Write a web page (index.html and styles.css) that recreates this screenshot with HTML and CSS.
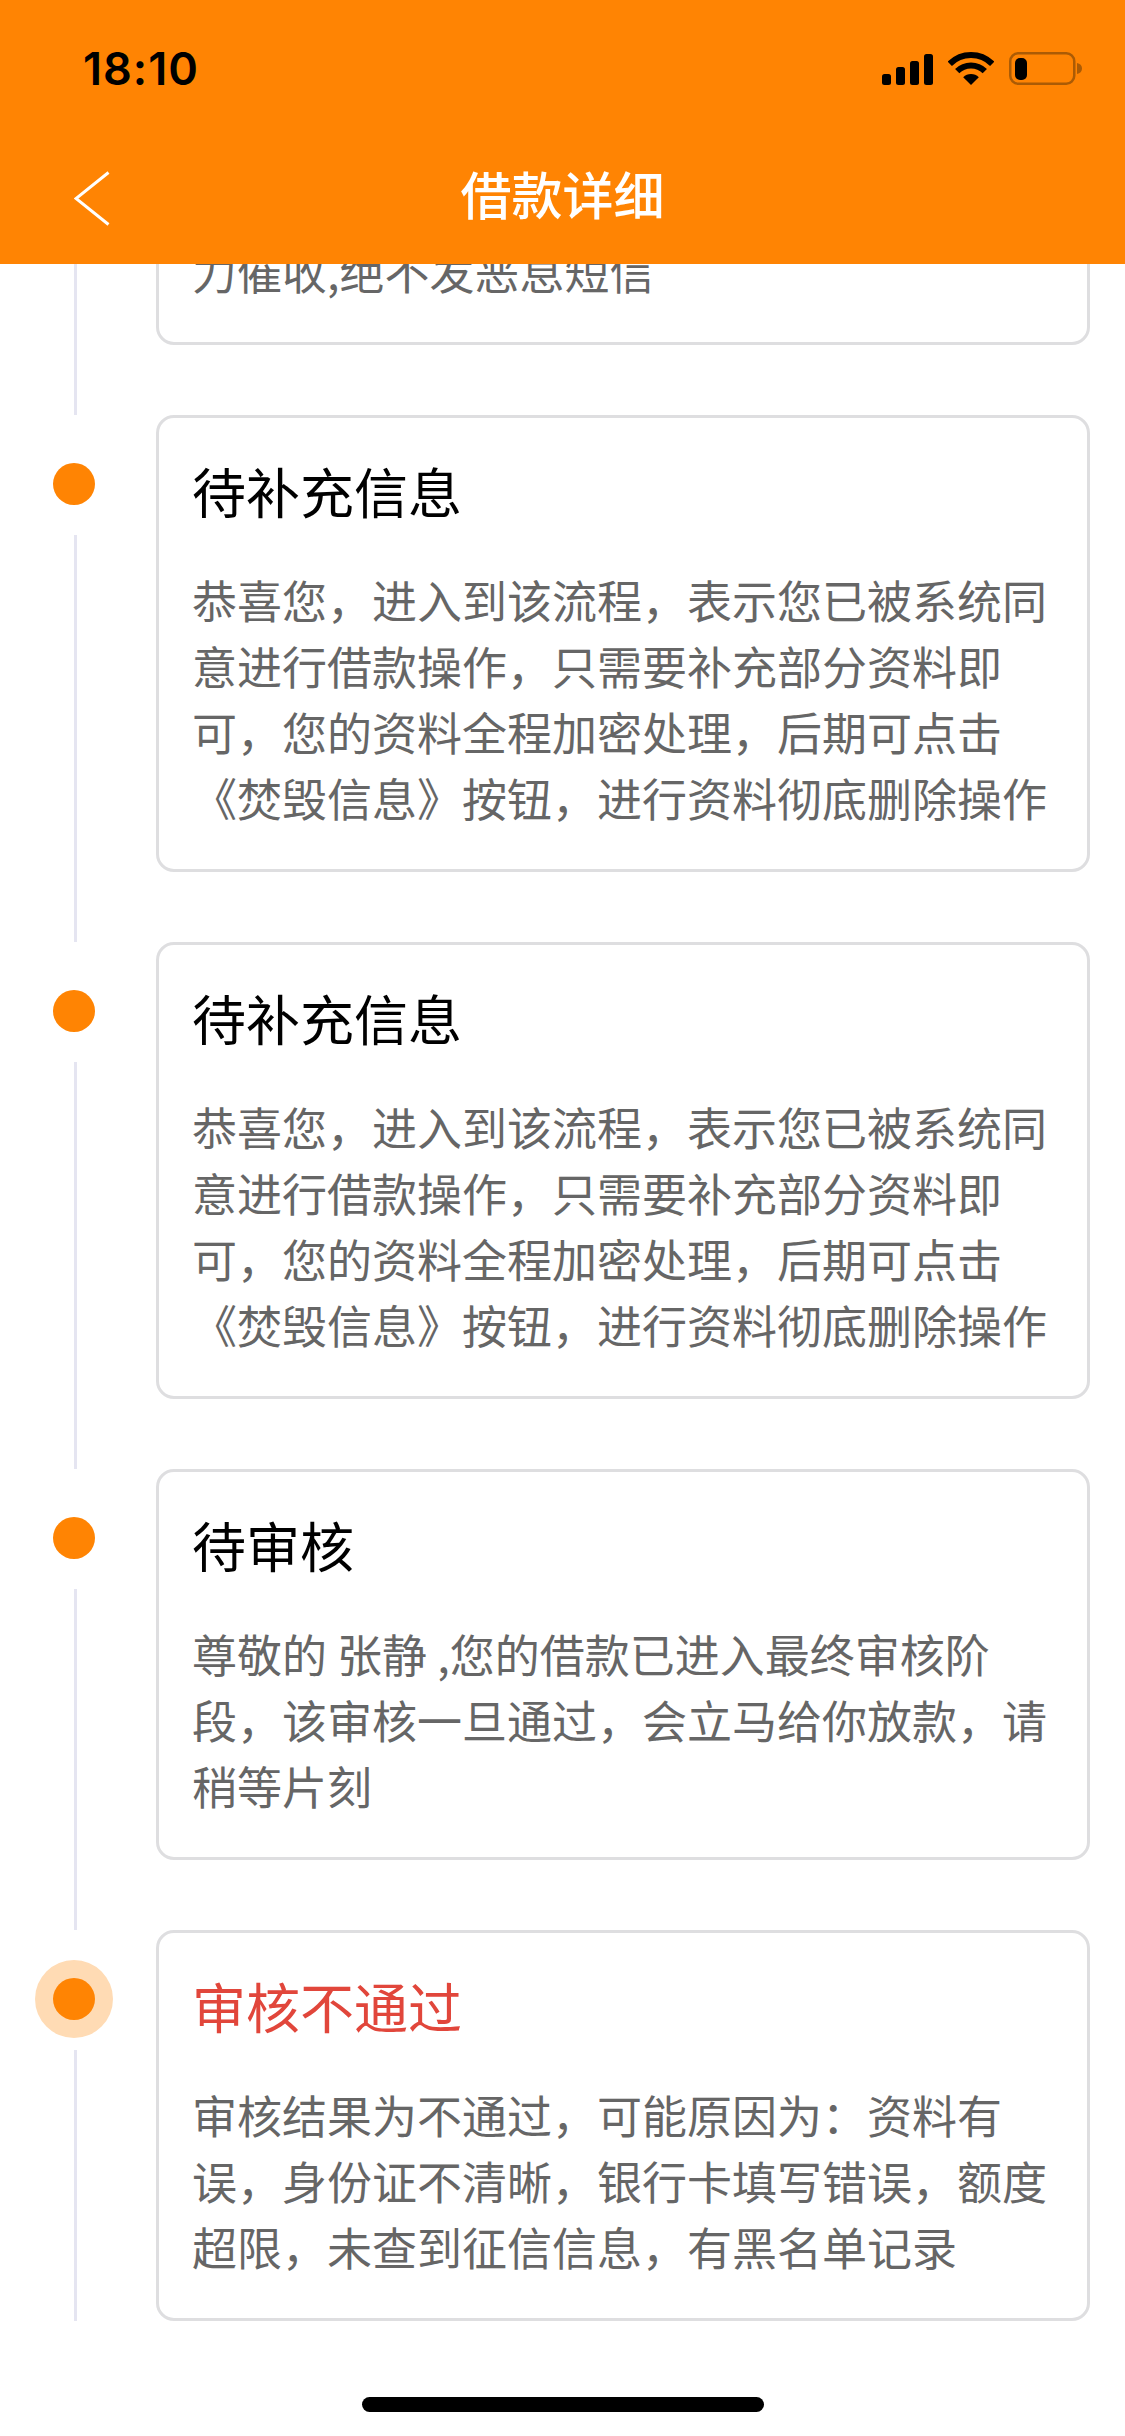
FILE: index.html
```html
<!DOCTYPE html>
<html lang="zh-CN">
<head>
<meta charset="utf-8">
<title>借款详细</title>
<link rel="stylesheet" href="styles.css">
</head>
<body>
<div class="app">
  <header class="top">
    <div class="status">
      <span class="time">18:10</span>
      <div class="status-icons">
        <svg class="signal" viewBox="0 0 51 31" width="51" height="31"><rect x="0" y="20" width="9" height="11" rx="2.5"/><rect x="14" y="13" width="9" height="18" rx="2.5"/><rect x="28" y="7" width="9" height="24" rx="2.5"/><rect x="42" y="0" width="9" height="31" rx="2.5"/></svg>
        <svg class="wifi" viewBox="0 0 46 33" width="46" height="33"><path d="M1.8 11.8A30 30 0 0 1 44.2 11.8" fill="none" stroke="#000" stroke-width="6"/><path d="M9.2 19.2A19.5 19.5 0 0 1 36.8 19.2" fill="none" stroke="#000" stroke-width="6"/><path d="M23 33L15.2 25.2A11 11 0 0 1 30.8 25.2Z"/></svg>
        <svg class="battery" viewBox="0 0 73 33" width="73" height="33"><rect x="1.25" y="1.25" width="64" height="30.5" rx="8" fill="none" stroke="#ab5b05" stroke-width="2.5"/><rect x="6" y="6" width="12" height="22" rx="5"/><path d="M68 11c3 .5 5 2.500 5 5.500s-2 5-5 5.500Z" fill="#ab5b05"/></svg>
      </div>
    </div>
    <div class="nav">
      <svg class="back" viewBox="0 0 36 55" width="36" height="55"><path d="M34.500 1.500L2 27.500L34.500 53.500" fill="none" stroke="#fff" stroke-width="3"/></svg>
      <h1 class="nav-title">借款详细</h1>
    </div>
  </header>

  <main class="list">
    <section class="item item-first">
      <div class="rail"><span class="line"></span></div>
      <div class="card card-clipped">
        <p class="card-body">力催收,绝不发恶息短信</p>
      </div>
    </section>

    <section class="item">
      <div class="rail"><span class="dot"></span><span class="line"></span></div>
      <div class="card">
        <h2 class="card-title">待补充信息</h2>
        <p class="card-body">恭喜您&#xFF0C;进入到该流程&#xFF0C;表示您已被系统同意进行借款操作&#xFF0C;只需要补充部分资料即可&#xFF0C;您的资料全程加密处理&#xFF0C;后期可点击《焚毁信息》按钮&#xFF0C;进行资料彻底删除操作</p>
      </div>
    </section>

    <section class="item">
      <div class="rail"><span class="dot"></span><span class="line"></span></div>
      <div class="card">
        <h2 class="card-title">待补充信息</h2>
        <p class="card-body">恭喜您&#xFF0C;进入到该流程&#xFF0C;表示您已被系统同意进行借款操作&#xFF0C;只需要补充部分资料即可&#xFF0C;您的资料全程加密处理&#xFF0C;后期可点击《焚毁信息》按钮&#xFF0C;进行资料彻底删除操作</p>
      </div>
    </section>

    <section class="item">
      <div class="rail"><span class="dot"></span><span class="line"></span></div>
      <div class="card">
        <h2 class="card-title">待审核</h2>
        <p class="card-body">尊敬的 张静 ,您的借款已进入最终审核阶段&#xFF0C;该审核一旦通过&#xFF0C;会立马给你放款&#xFF0C;请稍等片刻</p>
      </div>
    </section>

    <section class="item item-last">
      <div class="rail"><span class="dot dot-active"></span><span class="line"></span></div>
      <div class="card">
        <h2 class="card-title card-title-fail">审核不通过</h2>
        <p class="card-body">审核结果为不通过&#xFF0C;可能原因为&#xFF1A;资料有误&#xFF0C;身份证不清晰&#xFF0C;银行卡填写错误&#xFF0C;额度超限&#xFF0C;未查到征信信息&#xFF0C;有黑名单记录</p>
      </div>
    </section>
  </main>

  <div class="home-bar"></div>
</div>
</body>
</html>
```

FILE: styles.css
```css
* { box-sizing: border-box; }

html, body {
  margin: 0;
  padding: 0;
  background: #fff;
}

.app {
  width: 1125px;
  height: 2436px;
  display: flex;
  flex-direction: column;
  overflow: hidden;
  font-family: "Noto Sans CJK SC", "Noto Sans", sans-serif;
}

.top {
  height: 264px;
  flex: none;
  background: #ff8403;
  position: relative;
  z-index: 1;
}

.status {
  height: 138px;
  padding: 52px 43px 0 83px;
  display: flex;
  justify-content: space-between;
  align-items: flex-start;
}

.time {
  font-family: Inter, "Liberation Sans", sans-serif;
  font-size: 45px;
  font-weight: 600;
  line-height: 33px;
  letter-spacing: 1px;
  color: #000;
}

.status-icons {
  display: flex;
  align-items: flex-end;
  gap: 15px;
}

.signal { margin-bottom: 0.5px; }

.nav {
  height: 126px;
  padding-top: 27px;
  position: relative;
  display: flex;
  justify-content: center;
}

.back {
  position: absolute;
  left: 74px;
  top: 33px;
}

.nav-title {
  margin: 0;
  font-size: 51px;
  font-weight: 500;
  line-height: 56px;
  color: #fff;
}

.list {
  flex: 1;
  min-height: 0;
  overflow: hidden;
}

.item {
  display: grid;
  grid-template-columns: 148px 1fr;
  column-gap: 8px;
  padding-right: 35px;
}

.rail {
  display: flex;
  flex-direction: column;
  align-items: center;
}

.dot {
  width: 42px;
  height: 42px;
  flex: none;
  margin-top: 48px;
  border-radius: 50%;
  background: #ff8403;
}

.dot-active {
  box-shadow: 0 0 0 18px #ffdbb4;
}

.line {
  flex: 1;
  width: 3px;
  margin-top: 30px;
  margin-left: 3px;
  background: #e5e5f1;
}

.item-first .line { margin-top: 0; }

.card {
  margin-bottom: 70px;
  padding: 35px 34px 38px 33px;
  border: 3px solid #dedee0;
  border-radius: 18px;
  background: #fff;
}

.card-clipped { margin-top: -64px; }

.item-last .card { margin-bottom: 0; }

.card-title {
  margin: 0 0 38px;
  font-size: 54px;
  font-weight: 400;
  line-height: 76px;
  color: #000;
}

.card-title-fail { color: #e1463b; }

.card-body {
  margin: 0;
  font-size: 45px;
  line-height: 66px;
  color: #666;
}

.home-bar {
  width: 402px;
  height: 15px;
  flex: none;
  margin: 0 auto 24px;
  border-radius: 8px;
  background: #000;
}
```
